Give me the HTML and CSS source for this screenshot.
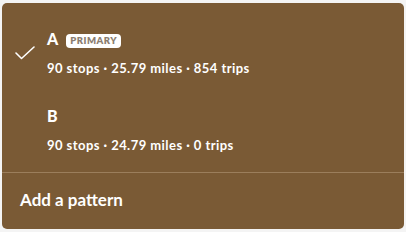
FILE: index.html
```html
<!DOCTYPE html>
<html>
<head>
<meta charset="utf-8">
<link rel="stylesheet" href="styles.css">
</head>
<body>
<div class="menu">
  <div class="item">
    <div class="check">
      <svg width="20" height="14" viewBox="0 0 20 14"><path d="M1 7 L6.5 12.5 L19 1" fill="none" stroke="#fff" stroke-width="1.6" stroke-linecap="round" stroke-linejoin="round"/></svg>
    </div>
    <div class="body">
      <div class="title">A <span class="badge">PRIMARY</span></div>
      <div class="meta">90 stops · 25.79 miles · 854 trips</div>
    </div>
  </div>
  <div class="item item-b">
    <div class="check"></div>
    <div class="body">
      <div class="title">B</div>
      <div class="meta">90 stops · 24.79 miles · 0 trips</div>
    </div>
  </div>
  <div class="divider"></div>
  <div class="add">Add a pattern</div>
</div>
</body>
</html>
```
FILE: styles.css
```css
html, body {
  margin: 0;
  padding: 0;
  background: #f4f4f4;
  width: 406px;
  height: 232px;
  overflow: hidden;
}
.menu {
  margin: 3px 2px 0 2px;
  height: 226px;
  background: #7a5a35;
  border-radius: 5px;
  color: #fff;
  font-family: Lato, "Noto Sans", sans-serif;
  box-sizing: border-box;
  padding-top: 26px;
}
.item {
  display: flex;
  align-items: center;
}
.item-b {
  margin-top: 30px;
}
.check {
  width: 45px;
  display: flex;
  justify-content: center;
  padding-top: 1px;
}
.body {
  display: flex;
  flex-direction: column;
}
.title {
  font-weight: 900;
  font-size: 16px;
  line-height: 20px;
  display: flex;
  align-items: center;
  gap: 8px;
}
.badge {
  background: #fff;
  color: #8c7e70;
  font-size: 9.5px;
  font-weight: 800;
  letter-spacing: 0.5px;
  line-height: 14px;
  padding: 0 4px;
  margin-top: 4px;
  border-radius: 4px;
}
.meta {
  font-size: 13px;
  font-weight: 700;
  letter-spacing: 0.45px;
  margin-top: 11px;
  line-height: 16px;
}
.divider {
  height: 1px;
  background: #9b7e5c;
  margin-top: 19px;
}
.add {
  font-size: 17px;
  font-weight: 700;
  padding: 17px 0 0 18px;
  line-height: 20px;
}
```
